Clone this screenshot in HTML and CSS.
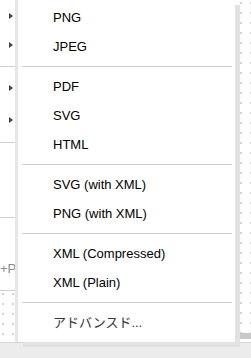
FILE: index.html
```html
<!DOCTYPE html>
<html lang="ja">
<head>
	<meta charset="UTF-8">
	<title>Export menu</title>
	<link rel="stylesheet" href="styles.css">
</head>
<body>
	<div class="page">
		<div class="main">
			<div class="side">
				<div class="group g1"><span class="arrow"></span><span class="arrow"></span></div>
				<div class="group g2"><span class="arrow"></span><span class="arrow"></span></div>
				<div class="group g3"></div>
				<div class="group g4"><span class="hint">+P</span></div>
				<div class="side-grid"></div>
			</div>
			<div class="splitter"></div>
			<div class="canvas">
				<div class="hscroll"></div>
			</div>
		</div>
		<footer></footer>
	</div>

	<div class="menu">
		<div class="item">PNG</div>
		<div class="item">JPEG</div>
		<div class="sep"></div>
		<div class="item">PDF</div>
		<div class="item">SVG</div>
		<div class="item">HTML</div>
		<div class="sep"></div>
		<div class="item">SVG (with XML)</div>
		<div class="item">PNG (with XML)</div>
		<div class="sep"></div>
		<div class="item">XML (Compressed)</div>
		<div class="item">XML (Plain)</div>
		<div class="sep"></div>
		<div class="item jp">アドバンスド...</div>
	</div>
</body>
</html>
```

FILE: styles.css
```css
*{
	margin:0;
	padding:0;
	box-sizing:border-box;
}
html,body{
	width:100%;
	height:100%;
	overflow:hidden;
	background:#fff;
	font-family:"Liberation Sans", Arial, sans-serif;
}
.page{
	width:100%;
	height:100%;
	display:flex;
	flex-direction:column;
}
.main{
	flex:1;
	display:flex;
}
.side{
	width:15px;
	display:flex;
	flex-direction:column;
}
.group{
	display:flex;
	flex-direction:column;
	border-bottom:1px solid #d0d0d0;
}
.g1{
	height:67px;
	padding-top:13px;
	gap:23px;
}
.g2{
	height:76px;
	padding-top:18px;
	gap:26px;
}
.g3{
	height:75px;
}
.g4{
	height:73px;
	justify-content:flex-end;
	padding-bottom:14px;
}
.hint{
	font-size:13px;
	line-height:15px;
	color:#8a8a8a;
	white-space:nowrap;
}
.arrow{
	display:block;
	width:0;
	height:0;
	margin-left:9px;
	border-top:3px solid transparent;
	border-bottom:3px solid transparent;
	border-left:4px solid #444;
}
.side-grid,
.canvas{
	background-color:#fff;
	background-image:radial-gradient(circle, #d4d4d4 0.8px, transparent 1px);
	background-size:10px 10px;
	background-position:-2px -2px;
}
.side-grid{
	flex:1;
}
.splitter{
	width:3px;
	background:#e6e6e6;
}
.canvas{
	flex:1;
	display:flex;
	flex-direction:column;
	justify-content:flex-end;
	padding-bottom:3px;
}
.hscroll{
	height:6px;
	background:#c8c8c8;
}
footer{
	height:16px;
	background:#ececec;
	border-top:1px solid #d6d6d6;
}
.menu{
	position:absolute;
	left:18px;
	top:0;
	width:217px;
	padding:3px 3px 5px 4px;
	background:#fff;
	box-shadow:5px 5px 0 #e2e2e2;
}
.item{
	padding:7px 0 7px 31px;
	font-size:13px;
	line-height:15px;
	color:#000;
	white-space:nowrap;
}
.item.jp{
	font-family:"Liberation Sans", "Noto Sans CJK JP", sans-serif;
	color:#333;
}
.sep{
	height:1px;
	margin:5px 0;
	background:#cfcfcf;
}
```
